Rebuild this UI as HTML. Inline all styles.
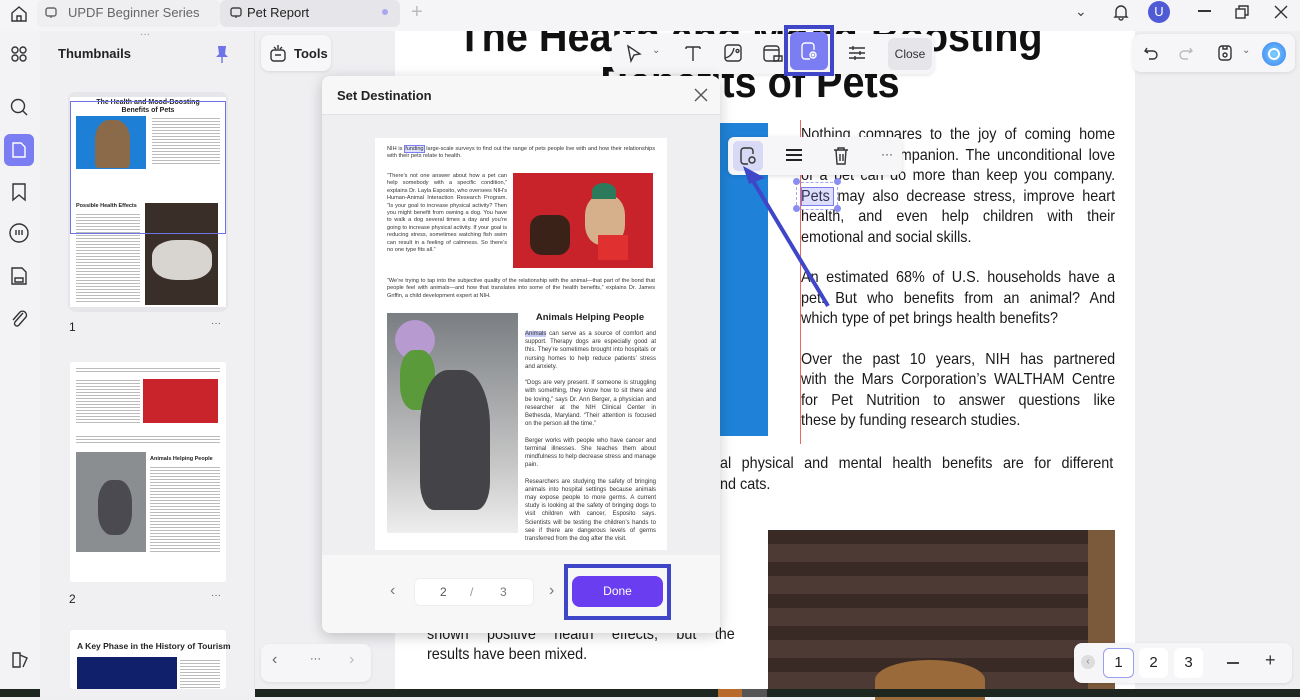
<!DOCTYPE html>
<html><head><meta charset="utf-8">
<style>
*{margin:0;padding:0;box-sizing:border-box}
body{width:1300px;height:697px;overflow:hidden;background:#efeff2;font-family:"Liberation Sans",sans-serif;position:relative;color:#222}
.a{position:absolute}
.j{text-align:justify;text-align-last:justify;white-space:nowrap;overflow:hidden}
.ml{position:absolute;left:801px;width:349px;font-size:16px;height:20px;line-height:20px;color:#1a1a1a;transform:scaleX(0.9);transform-origin:0 0}
.tiny{font-size:5.6px;line-height:7.4px;color:#333;text-align:justify}
.icon{position:absolute;stroke:#333;fill:none;stroke-width:1.4}
</style></head><body>
<!-- main page -->
<div class="a" style="left:395px;top:31px;width:740px;height:658px;background:#fff"></div>
<div class="a" style="left:395px;top:31px;width:740px;height:80px;overflow:hidden">
<div class="a" style="left:0;top:-17px;width:789px;text-align:center;font-size:44px;font-weight:bold;line-height:46px;color:#111;transform:scaleX(0.9);transform-origin:0 0">The Health and Mood-Boosting<br>Benefits of Pets</div>
</div>
<div class="a" style="left:720px;top:123px;width:48px;height:313px;background:#1f82d8"></div>
<div class="a" style="left:800px;top:120px;width:1px;height:324px;background:#e66"></div>
<div class="ml j" style="top:125px">Nothing compares to the joy of coming home</div>
<div class="ml j" style="top:146px">with a loyal companion. The unconditional love</div>
<div class="ml j" style="top:166px">of a pet can do more than keep you company.</div>
<div class="ml j" style="top:187px">Pets may also decrease stress, improve heart</div>
<div class="ml j" style="top:207px">health, and even help children with their</div>
<div class="ml" style="top:228px">emotional and social skills.</div>
<div class="ml j" style="top:268px">An estimated 68% of U.S. households have a</div>
<div class="ml j" style="top:289px">pet. But who benefits from an animal? And</div>
<div class="ml" style="top:309px">which type of pet brings health benefits?</div>
<div class="ml j" style="top:350px">Over the past 10 years, NIH has partnered</div>
<div class="ml j" style="top:370px">with the Mars Corporation’s WALTHAM Centre</div>
<div class="ml j" style="top:391px">for Pet Nutrition to answer questions like</div>
<div class="ml" style="top:411px">these by funding research studies.</div>
<div class="ml j" style="left:720px;width:437px;top:454px">al physical and mental health benefits are for different</div>
<div class="ml" style="left:720px;top:475px">nd cats.</div>
<div class="ml j" style="left:427px;width:342px;top:625px">shown positive health effects, but the</div>
<div class="ml" style="left:427px;top:645px">results have been mixed.</div>
<div class="a" style="left:768px;top:530px;width:347px;height:159px;background:repeating-linear-gradient(#3a2a26 0 14px,#4e3a34 14px 32px)"></div>
<div class="a" style="left:1088px;top:530px;width:27px;height:159px;background:#7a5a3a"></div>
<div class="a" style="left:875px;top:660px;width:110px;height:40px;border-radius:50% 50% 0 0;background:#9a6a3a"></div>
<!-- Pets selection -->
<div class="a" style="left:801px;top:187px;width:33px;height:19px;background:rgba(120,125,240,.25);border:1px solid #7a7ef2"></div>
<div class="a" style="left:796px;top:182px;width:42px;height:28px;border:1px dashed #a5a8f0"></div>
<div class="a" style="left:793px;top:178px;width:7px;height:7px;border-radius:4px;background:#8a8ef0"></div>
<div class="a" style="left:834px;top:178px;width:7px;height:7px;border-radius:4px;background:#8a8ef0"></div>
<div class="a" style="left:793px;top:205px;width:7px;height:7px;border-radius:4px;background:#8a8ef0"></div>
<div class="a" style="left:834px;top:205px;width:7px;height:7px;border-radius:4px;background:#8a8ef0"></div>

<!-- top bar -->
<div class="a" style="left:0;top:0;width:1300px;height:31px;background:#f5f5f7"></div>
<svg class="icon" style="left:9px;top:4px" width="20" height="20" viewBox="0 0 20 20"><path d="M3 9 L10 3 L17 9 V17 H3 Z M8 17 V12 H12 V17"/></svg>
<div class="a" style="left:37px;top:0;width:183px;height:27px;background:#efeff1;border-radius:6px"></div>
<svg class="icon" style="left:44px;top:6px;stroke:#666" width="14" height="14" viewBox="0 0 14 14"><rect x="2" y="2" width="10" height="8" rx="2"/><path d="M7 10v2"/></svg>
<div class="a" style="left:68px;top:5px;font-size:13px;color:#666">UPDF Beginner Series</div>
<div class="a" style="left:220px;top:0;width:180px;height:27px;background:#e6e6ea;border-radius:6px"></div>
<svg class="icon" style="left:229px;top:6px;stroke:#444" width="14" height="14" viewBox="0 0 14 14"><rect x="2" y="2" width="10" height="8" rx="2"/><path d="M7 10v2"/></svg>
<div class="a" style="left:247px;top:5px;font-size:13px;color:#222">Pet Report</div>
<div class="a" style="left:382px;top:9px;width:6px;height:6px;border-radius:3px;background:#a8a8ee"></div>
<div class="a" style="left:411px;top:1px;font-size:20px;color:#bbb">+</div>
<div class="a" style="left:1075px;top:3px;font-size:14px;color:#444">⌄</div>
<svg class="icon" style="left:1112px;top:3px" width="18" height="18" viewBox="0 0 18 18"><path d="M4 13V8a5 5 0 0 1 10 0v5l1 1H3zM7 15a2 2 0 0 0 4 0"/></svg>
<div class="a" style="left:1148px;top:1px;width:22px;height:22px;border-radius:11px;background:#4f5bd5;color:#fff;font-size:13px;text-align:center;line-height:22px">U</div>
<div class="a" style="left:1198px;top:10px;width:13px;height:1.5px;background:#333"></div>
<svg class="icon" style="left:1234px;top:4px" width="16" height="16" viewBox="0 0 16 16"><rect x="2" y="5" width="9" height="9"/><path d="M5 5V2h9v9h-3"/></svg>
<svg class="icon" style="left:1273px;top:4px" width="16" height="16" viewBox="0 0 16 16"><path d="M2 2l12 12M14 2L2 14"/></svg>

<!-- left rail -->
<div class="a" style="left:0;top:31px;width:40px;height:658px;background:#f3f3f5"></div>
<svg class="icon" style="left:9px;top:44px" width="20" height="20" viewBox="0 0 20 20"><circle cx="6" cy="6" r="3"/><circle cx="14" cy="6" r="3"/><circle cx="6" cy="14" r="3"/><circle cx="14" cy="14" r="3"/></svg>
<svg class="icon" style="left:9px;top:97px" width="20" height="20" viewBox="0 0 20 20"><circle cx="9" cy="9" r="6.5"/><path d="M14 14l4 4"/></svg>
<div class="a" style="left:4px;top:134px;width:30px;height:32px;border-radius:6px;background:#7a7ef2"></div>
<svg class="icon" style="left:10px;top:140px;stroke:#fff" width="18" height="20" viewBox="0 0 18 20"><path d="M3 3h8l4 4v10H3z"/></svg>
<svg class="icon" style="left:11px;top:182px" width="16" height="20" viewBox="0 0 16 20"><path d="M2 2h12v16l-6-5-6 5z"/></svg>
<svg class="icon" style="left:8px;top:222px" width="22" height="22" viewBox="0 0 22 22"><circle cx="11" cy="11" r="9"/><path d="M8 8v5M11 8v5M14 8v5"/></svg>
<svg class="icon" style="left:10px;top:265px" width="18" height="22" viewBox="0 0 18 22"><path d="M2 3h10l4 4v12H2z M5 13h8v4H5z"/></svg>
<svg class="icon" style="left:10px;top:308px" width="18" height="22" viewBox="0 0 18 22"><path d="M13 5L5 14a2.5 2.5 0 0 0 4 3l7-8a4 4 0 0 0-6-5L3 12"/></svg>
<svg class="icon" style="left:10px;top:650px" width="20" height="20" viewBox="0 0 20 20"><path d="M3 3h7v14H3zM10 5l7 3-4 9"/></svg>

<!-- thumbnails panel -->
<div class="a" style="left:40px;top:31px;width:215px;height:658px;background:#f0f0f2;border-right:1px solid #e4e4e8"></div>
<div class="a" style="left:140px;top:29px;font-size:10px;color:#888">···</div>
<div class="a" style="left:58px;top:46px;font-size:13px;font-weight:bold;color:#222">Thumbnails</div>
<svg class="a" style="left:215px;top:44px" width="14" height="20" viewBox="0 0 14 20"><path d="M3 2h8l-1 8 3 3H1l3-3z" fill="#6f73e8"/><path d="M7 13v6" stroke="#6f73e8" stroke-width="1.4"/></svg>
<div class="a" style="left:68px;top:92px;width:160px;height:220px;background:#e6e6ea;border-radius:8px"></div>
<div class="a" style="left:70px;top:97px;width:156px;height:210px;background:#fff"></div>
<div class="a" style="left:70px;top:99px;width:156px;text-align:center;font-size:7px;font-weight:bold;line-height:8px">The Health and Mood-Boosting<br>Benefits of Pets</div>
<div class="a" style="left:76px;top:116px;width:70px;height:53px;background:#1e7fd6"></div>
<div class="a" style="left:95px;top:120px;width:35px;height:48px;background:#8a6a48;border-radius:40% 40% 10% 10%"></div>
<div class="a" style="left:152px;top:116px;width:68px;height:50px;background:repeating-linear-gradient(#fff 0 2px,#bbb 2px 3px)"></div>
<div class="a" style="left:76px;top:203px;font-size:5.5px;font-weight:bold">Possible Health Effects</div>
<div class="a" style="left:76px;top:212px;width:64px;height:90px;background:repeating-linear-gradient(#fff 0 2px,#bbb 2px 3px)"></div>
<div class="a" style="left:145px;top:203px;width:73px;height:102px;background:#3a2e28"></div>
<div class="a" style="left:152px;top:240px;width:60px;height:40px;background:#d8d4cf;border-radius:40%"></div>
<div class="a" style="left:70px;top:101px;width:156px;height:133px;border:1.5px solid #6f73e8"></div>
<div class="a" style="left:69px;top:320px;font-size:12px">1</div>
<div class="a" style="left:211px;top:318px;font-size:10px;color:#555">···</div>
<div class="a" style="left:70px;top:362px;width:156px;height:220px;background:#fff;border-radius:3px"></div>
<div class="a" style="left:76px;top:366px;width:144px;height:8px;background:repeating-linear-gradient(#fff 0 2px,#bbb 2px 3px)"></div>
<div class="a" style="left:76px;top:378px;width:64px;height:45px;background:repeating-linear-gradient(#fff 0 2px,#bbb 2px 3px)"></div>
<div class="a" style="left:143px;top:379px;width:75px;height:44px;background:#c9242b"></div>
<div class="a" style="left:76px;top:434px;width:144px;height:10px;background:repeating-linear-gradient(#fff 0 2px,#bbb 2px 3px)"></div>
<div class="a" style="left:76px;top:452px;width:70px;height:100px;background:#8a8e90"></div>
<div class="a" style="left:98px;top:480px;width:34px;height:55px;background:#4a4a50;border-radius:40%"></div>
<div class="a" style="left:150px;top:456px;font-size:5.5px;font-weight:bold">Animals Helping People</div>
<div class="a" style="left:150px;top:465px;width:70px;height:88px;background:repeating-linear-gradient(#fff 0 2px,#bbb 2px 3px)"></div>
<div class="a" style="left:69px;top:592px;font-size:12px">2</div>
<div class="a" style="left:211px;top:590px;font-size:10px;color:#555">···</div>
<div class="a" style="left:70px;top:630px;width:156px;height:59px;background:#fff;border-radius:3px"></div>
<div class="a" style="left:77px;top:641px;font-size:8.5px;font-weight:bold">A Key Phase in the History of Tourism</div>
<div class="a" style="left:77px;top:657px;width:100px;height:32px;background:#10206a"></div>
<div class="a" style="left:180px;top:658px;width:40px;height:30px;background:repeating-linear-gradient(#fff 0 2px,#bbb 2px 3px)"></div>

<!-- Tools button -->
<div class="a" style="left:261px;top:35px;width:70px;height:36px;background:#f7f7f9;border-radius:8px;box-shadow:0 1px 3px rgba(0,0,0,.1)"></div>
<svg class="icon" style="left:269px;top:43px" width="18" height="20" viewBox="0 0 18 20"><rect x="2" y="7" width="14" height="11" rx="3"/><path d="M6 12h6M5 4l2 2M9 2v4M13 4l-2 2"/></svg>
<div class="a" style="left:294px;top:46px;font-size:13px;font-weight:bold;color:#222">Tools</div>

<!-- top edit toolbar -->
<div class="a" style="left:612px;top:34px;width:322px;height:40px;background:#f6f6f8;border-radius:8px;box-shadow:0 1px 4px rgba(0,0,0,.12)"></div>
<svg class="icon" style="left:625px;top:44px" width="18" height="20" viewBox="0 0 18 20"><path d="M3 2l12 8-6 1-3 6z"/></svg>
<div class="a" style="left:652px;top:45px;font-size:10px;color:#666">⌄</div>
<svg class="icon" style="left:683px;top:43px" width="20" height="20" viewBox="0 0 20 20"><path d="M3 4h14M10 4v14M3 4v2M17 4v2"/></svg>
<svg class="icon" style="left:723px;top:43px" width="20" height="20" viewBox="0 0 20 20"><rect x="2" y="2" width="16" height="16" rx="3"/><path d="M2 15c5-1 8-5 9-10M13 8a1.5 1.5 0 1 0 0-.1"/></svg>
<svg class="icon" style="left:762px;top:43px" width="22" height="20" viewBox="0 0 22 20"><rect x="2" y="3" width="15" height="15" rx="3"/><path d="M2 7h15M12 13h8v5h-8z"/></svg>
<div class="a" style="left:784px;top:25px;width:50px;height:51px;border:4px solid #3f46c8"></div>
<div class="a" style="left:790px;top:32px;width:38px;height:38px;background:#7a7ef2;border-radius:6px"></div>
<svg class="icon" style="left:799px;top:41px;stroke:#fff" width="20" height="20" viewBox="0 0 20 20"><path d="M15 9V5a3 3 0 0 0-3-3H6a3 3 0 0 0-3 3v10a3 3 0 0 0 3 3h5"/><circle cx="14" cy="14" r="3"/><circle cx="14" cy="14" r="0.8"/></svg>
<svg class="icon" style="left:847px;top:43px" width="20" height="20" viewBox="0 0 20 20"><path d="M2 5h16M2 10h16M2 15h16M6 3v4M13 8v4M8 13v4"/></svg>
<div class="a" style="left:888px;top:38px;width:44px;height:32px;background:#e6e6ea;border-radius:6px;font-size:12px;color:#333;text-align:center;line-height:32px">Close</div>
<!-- right toolbar -->
<div class="a" style="left:1133px;top:34px;width:162px;height:38px;background:#f6f6f8;border-radius:8px;box-shadow:0 1px 4px rgba(0,0,0,.1)"></div>
<svg class="icon" style="left:1143px;top:45px" width="16" height="16" viewBox="0 0 16 16"><path d="M4 3L2 6l3 2M2 6h8a4 4 0 0 1 0 8H6"/></svg>
<svg class="icon" style="left:1178px;top:45px;stroke:#bbb" width="16" height="16" viewBox="0 0 16 16"><path d="M12 3l2 3-3 2M14 6H6a4 4 0 0 0 0 8h4"/></svg>
<svg class="icon" style="left:1216px;top:44px" width="18" height="18" viewBox="0 0 18 18"><rect x="3" y="2" width="12" height="14" rx="3"/><path d="M7 2v3h4V2"/><circle cx="9" cy="11" r="2"/></svg>
<div class="a" style="left:1242px;top:45px;font-size:10px;color:#666">⌄</div>
<div class="a" style="left:1262px;top:42px;width:24px;height:24px;border-radius:12px;background:radial-gradient(circle,#7ad0ff,#3a7ef0)"></div>
<div class="a" style="left:1268px;top:48px;width:12px;height:12px;border-radius:6px;border:2px solid #fff"></div>

<!-- annotation popup -->
<div class="a" style="left:728px;top:137px;width:174px;height:38px;background:#f6f6f8;border-radius:6px;box-shadow:0 1px 5px rgba(0,0,0,.15)"></div>
<div class="a" style="left:733px;top:141px;width:30px;height:30px;background:#d8d9f5;border-radius:5px"></div>
<svg class="icon" style="left:739px;top:146px" width="18" height="20" viewBox="0 0 18 20"><path d="M14 8V5a3 3 0 0 0-3-3H5a3 3 0 0 0-3 3v10a3 3 0 0 0 3 3h4"/><circle cx="13" cy="14" r="3"/></svg>
<div class="a" style="left:786px;top:149px;width:16px;height:2px;background:#222;box-shadow:0 5px 0 #222,0 10px 0 #222"></div>
<svg class="icon" style="left:832px;top:146px" width="18" height="20" viewBox="0 0 18 20"><path d="M2 4h14M6 4V2h6v2M4 4l1 14h8l1-14M8 8v7M11 8v7"/></svg>
<div class="a" style="left:881px;top:147px;font-size:12px;color:#333">···</div>
<svg class="a" style="left:735px;top:160px" width="100" height="150" viewBox="0 0 100 150"><path d="M93 146L15 16" stroke="#3f46c8" stroke-width="4"/><path d="M8 6l22 12-16 6z" fill="#3f46c8"/></svg>

<!-- dialog -->
<div class="a" style="left:322px;top:76px;width:398px;height:557px;background:#f7f7f8;border-radius:8px;box-shadow:0 3px 14px rgba(0,0,0,.2)"></div>
<div class="a" style="left:337px;top:88px;font-size:13px;font-weight:bold;color:#222">Set Destination</div>
<svg class="icon" style="left:693px;top:87px;stroke:#555" width="16" height="16" viewBox="0 0 16 16"><path d="M2 2l12 12M14 2L2 14"/></svg>
<div class="a" style="left:322px;top:114px;width:398px;height:1px;background:#e2e2e6"></div>
<div class="a" style="left:322px;top:115px;width:398px;height:440px;background:#efeff1"></div>
<div class="a" style="left:375px;top:138px;width:292px;height:412px;background:#fff"></div>
<div class="a tiny" style="left:387px;top:146px;width:268px;text-align-last:left">NIH is <span style="border:1px solid #7a7ef2;background:#e0e1fb">funding</span> large-scale surveys to find out the range of pets people live with and how their relationships with their pets relate to health.</div>
<div class="a tiny" style="left:387px;top:173px;width:120px">“There’s not one answer about how a pet can help somebody with a specific condition,” explains Dr. Layla Esposito, who oversees NIH’s Human-Animal Interaction Research Program. “Is your goal to increase physical activity? Then you might benefit from owning a dog. You have to walk a dog several times a day and you’re going to increase physical activity. If your goal is reducing stress, sometimes watching fish swim can result in a feeling of calmness. So there’s no one type fits all.”</div>
<div class="a" style="left:513px;top:173px;width:140px;height:95px;background:#c8232a"></div>
<div class="a" style="left:585px;top:195px;width:40px;height:50px;background:#d6b08a;border-radius:40%"></div>
<div class="a" style="left:592px;top:183px;width:24px;height:16px;background:#2b7a5c;border-radius:50% 50% 0 0"></div>
<div class="a" style="left:530px;top:215px;width:40px;height:40px;background:#3a2218;border-radius:30%"></div>
<div class="a" style="left:598px;top:235px;width:30px;height:25px;background:#e03030"></div>
<div class="a tiny" style="left:387px;top:278px;width:268px">“We’re trying to tap into the subjective quality of the relationship with the animal—that part of the bond that people feel with animals—and how that translates into some of the health benefits,” explains Dr. James Griffin, a child development expert at NIH.</div>
<div class="a" style="left:387px;top:313px;width:131px;height:220px;background:linear-gradient(#7a7e82,#c8c8c8 70%,#eee)"></div>
<div class="a" style="left:395px;top:320px;width:40px;height:40px;background:#b69ad0;border-radius:50%"></div>
<div class="a" style="left:400px;top:350px;width:35px;height:60px;background:#5a9a3a;border-radius:40%"></div>
<div class="a" style="left:420px;top:370px;width:70px;height:140px;background:#444448;border-radius:40% 40% 20% 20%"></div>
<div class="a" style="left:525px;top:312px;width:130px;text-align:center;font-size:9.5px;font-weight:bold">Animals Helping People</div>
<div class="a tiny" style="left:525px;top:330px;width:131px;font-size:6px;line-height:8.2px"><span style="background:#c8cbf7">Animals</span> can serve as a source of comfort and support. Therapy dogs are especially good at this. They’re sometimes brought into hospitals or nursing homes to help reduce patients’ stress and anxiety.<br><br>“Dogs are very present. If someone is struggling with something, they know how to sit there and be loving,” says Dr. Ann Berger, a physician and researcher at the NIH Clinical Center in Bethesda, Maryland. “Their attention is focused on the person all the time.”<br><br>Berger works with people who have cancer and terminal illnesses. She teaches them about mindfulness to help decrease stress and manage pain.<br><br>Researchers are studying the safety of bringing animals into hospital settings because animals may expose people to more germs. A current study is looking at the safety of bringing dogs to visit children with cancer, Esposito says. Scientists will be testing the children’s hands to see if there are dangerous levels of germs transferred from the dog after the visit.</div>
<div class="a" style="left:390px;top:582px;font-size:16px;color:#777">‹</div>
<div class="a" style="left:414px;top:578px;width:120px;height:28px;background:#fff;border-radius:6px;border:1px solid #eee"></div>
<div class="a" style="left:440px;top:585px;font-size:12px;color:#555">2</div>
<div class="a" style="left:470px;top:585px;font-size:12px;color:#999">/</div>
<div class="a" style="left:500px;top:585px;font-size:12px;color:#777">3</div>
<div class="a" style="left:549px;top:582px;font-size:16px;color:#777">›</div>
<div class="a" style="left:564px;top:564px;width:107px;height:56px;border:4px solid #3f46c8"></div>
<div class="a" style="left:572px;top:576px;width:91px;height:31px;background:#6a3df0;border-radius:8px;color:#fff;font-size:12px;text-align:center;line-height:31px">Done</div>

<!-- bottom left nav -->
<div class="a" style="left:261px;top:644px;width:110px;height:38px;background:#f6f6f8;border-radius:8px;box-shadow:0 1px 3px rgba(0,0,0,.08)"></div>
<div class="a" style="left:272px;top:651px;font-size:16px;color:#666">‹</div>
<div class="a" style="left:310px;top:653px;font-size:11px;color:#444">···</div>
<div class="a" style="left:349px;top:651px;font-size:16px;color:#bbb">›</div>
<!-- bottom right pagination -->
<div class="a" style="left:1074px;top:643px;width:218px;height:40px;background:#f6f6f8;border-radius:8px;box-shadow:0 1px 3px rgba(0,0,0,.1)"></div>
<div class="a" style="left:1081px;top:655px;width:14px;height:14px;border-radius:7px;background:#ddd;font-size:10px;text-align:center;line-height:14px;color:#888">‹</div>
<div class="a" style="left:1103px;top:648px;width:31px;height:30px;border:1.5px solid #9a9ef0;border-radius:6px;background:#fff;font-size:15px;text-align:center;line-height:27px">1</div>
<div class="a" style="left:1139px;top:648px;width:29px;height:30px;border-radius:6px;background:#fff;font-size:15px;text-align:center;line-height:30px">2</div>
<div class="a" style="left:1174px;top:648px;width:29px;height:30px;border-radius:6px;background:#fff;font-size:15px;text-align:center;line-height:30px">3</div>
<div class="a" style="left:1227px;top:662px;width:12px;height:1.5px;background:#444"></div>
<div class="a" style="left:1265px;top:650px;font-size:18px;color:#333">+</div>

<!-- taskbar -->
<div class="a" style="left:0;top:689px;width:1300px;height:8px;background:#1e2620"></div>
<div class="a" style="left:40px;top:689px;width:215px;height:8px;background:#f0f0f2"></div>
<div class="a" style="left:718px;top:689px;width:24px;height:8px;background:#b86a2a"></div>
<div class="a" style="left:742px;top:689px;width:25px;height:8px;background:#555"></div>
</body></html>
